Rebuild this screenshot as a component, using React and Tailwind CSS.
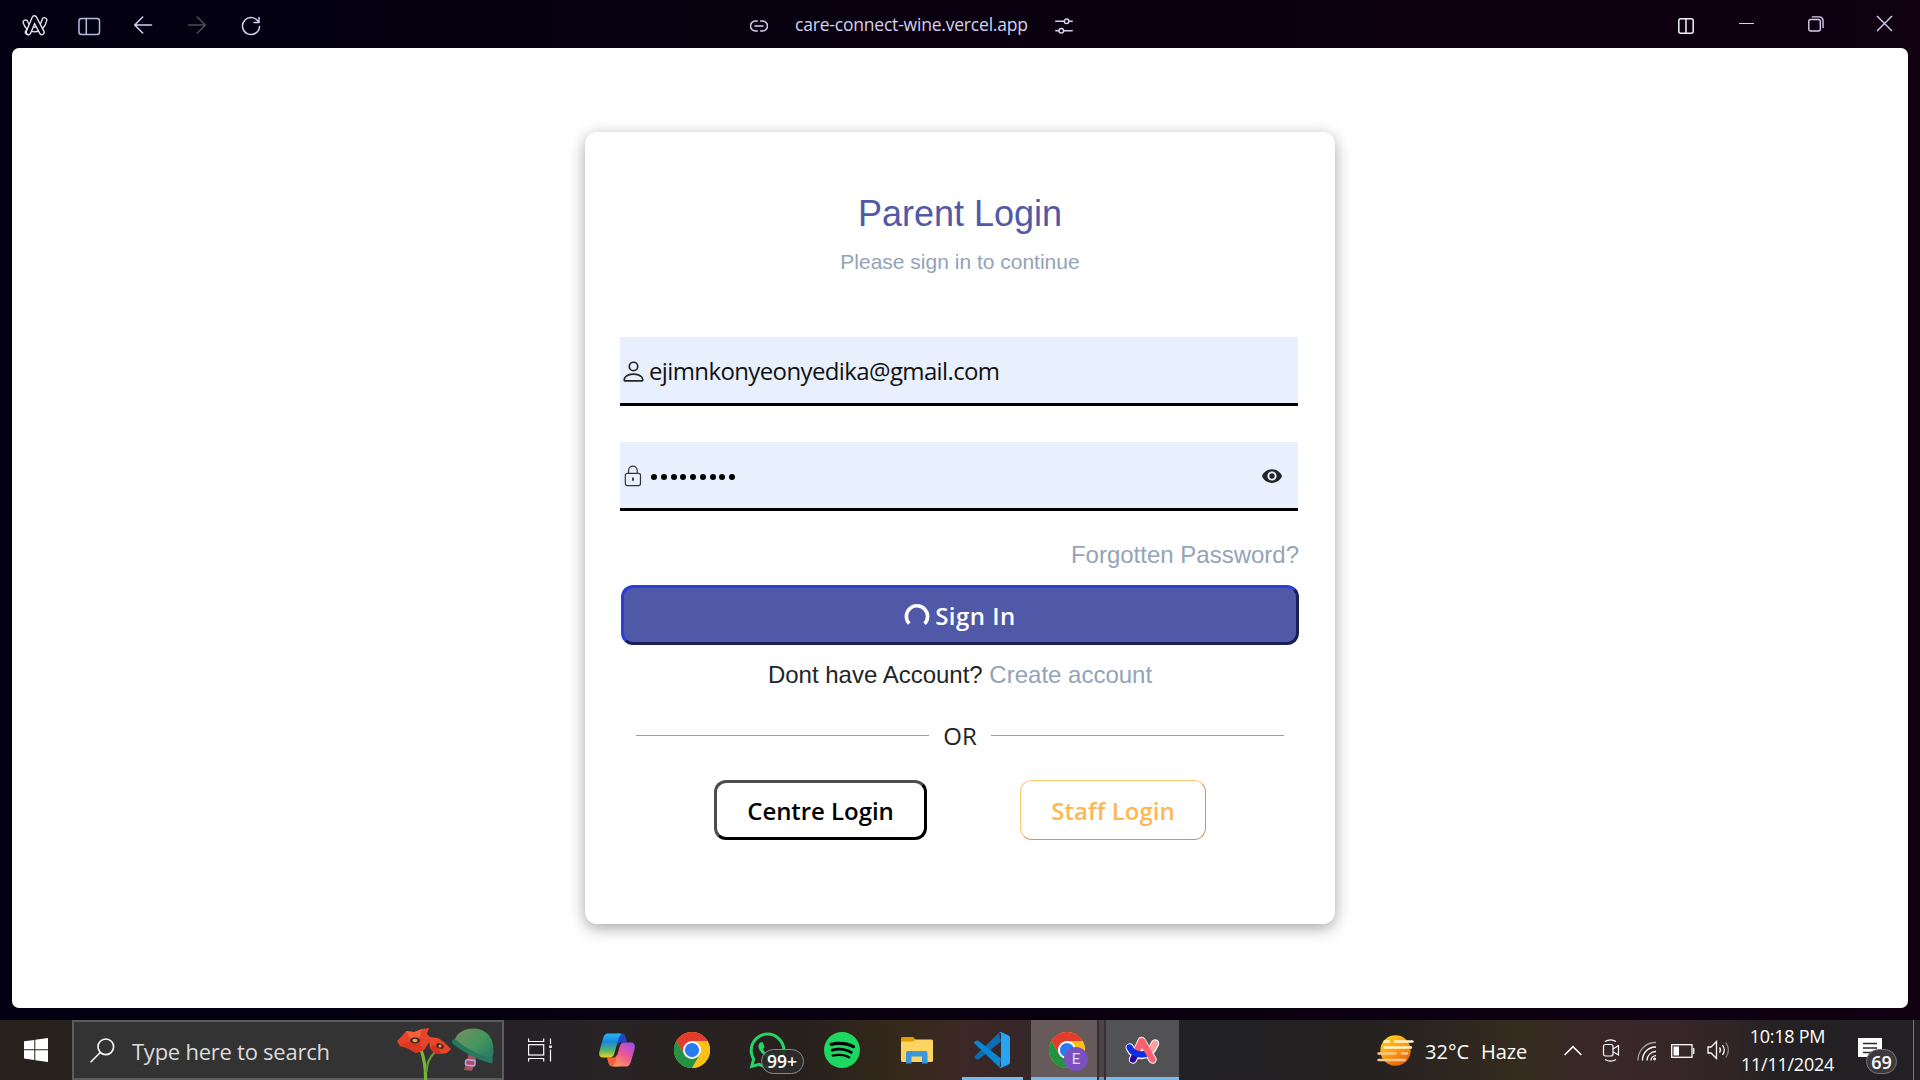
import { BsPerson } from 'react-icons/bs';
import { MdVisibility } from 'react-icons/md';
import { FaWhatsapp } from 'react-icons/fa';
import { SiSpotify } from 'react-icons/si';

/* ---------- Browser chrome ---------- */

function ArcOutline({ className }) {
  const parts = ['M7 24 L11 18', 'M4 11 Q7 20.5 16 20.5 Q26 20 29 8', 'M8 24 L15.7 5.5 L25.5 24'];
  return (
    <svg className={className} viewBox="0 0 33 29" fill="none" strokeLinecap="round" strokeLinejoin="round">
      {parts.map((d) => (
        <g key={d}>
          <path d={d} stroke="#e4e2ea" strokeWidth="8" />
          <path d={d} stroke="#020012" strokeWidth="4.4" />
        </g>
      ))}
    </svg>
  );
}

function TitleBar() {
  return (
    <header className="flex h-12 items-center bg-linear-to-r from-[#020012] via-[#09000f] to-[#100012] text-[#d5d2ee]">
      <ArcOutline className="mt-0.5 ml-[22px] h-[22px] w-[26px]" />
      <svg className="mt-[5px] ml-[29px] h-[19px] w-[24px]" viewBox="0 0 24 19" fill="none" stroke="#b9bbdc" strokeWidth="1.5">
        <rect x="2" y="1.5" width="20.5" height="16" rx="2.5" />
        <path d="M9.3 1.5V17.5" />
      </svg>
      <svg className="mt-[2px] ml-[32px] h-[20px] w-[20px]" viewBox="0 0 20 20" fill="none" stroke="currentColor" strokeWidth="1.5" strokeLinecap="round" strokeLinejoin="round">
        <path d="M9.7 2L1.7 10L9.7 18M1.7 10H18.5" />
      </svg>
      <svg className="mt-[2px] ml-[34px] h-[20px] w-[20px] text-[#504c5e]" viewBox="0 0 20 20" fill="none" stroke="currentColor" strokeWidth="1.5" strokeLinecap="round" strokeLinejoin="round">
        <path d="M10.3 2L18.3 10L10.3 18M18.3 10H1.5" />
      </svg>
      <svg className="mt-1 ml-[34px] h-[20px] w-[20px]" viewBox="0 0 20 20" fill="none" stroke="currentColor" strokeWidth="1.5" strokeLinecap="round" strokeLinejoin="round">
        <path d="M17.6 6.2A8.5 8.5 0 1 0 18.5 10.5" />
        <path d="M18 1.5V6.4H13" />
      </svg>
      <svg className="mt-[3px] ml-[489px] h-[12px] w-[18px]" viewBox="0 0 18 12" fill="none" stroke="currentColor" strokeWidth="1.5" strokeLinecap="round">
        <path d="M7.3 1H5.5A5 5 0 0 0 5.5 11H7.3M10.7 1H12.5A5 5 0 0 1 12.5 11H10.7M5 6H13" />
      </svg>
      <span className="ml-[27px] w-[233px] font-['Open_Sans','Noto_Sans',sans-serif] text-[17.5px] leading-6 tracking-[-0.2px] whitespace-nowrap">care-connect-wine.vercel.app</span>
      <svg className="mt-[3px] ml-[27px] h-[16px] w-[18px]" viewBox="0 0 18 16" fill="none" stroke="currentColor" strokeWidth="1.5" strokeLinecap="round">
        <path d="M0.8 3.3H9M14.4 3.3H17.2M0.8 12.7H3.6M9 12.7H17.2" />
        <circle cx="11.6" cy="3.3" r="2.3" />
        <circle cx="6.3" cy="12.7" r="2.3" />
      </svg>
      <svg className="mt-1 ml-[605px] h-[16px] w-[16px]" viewBox="0 0 16 16" fill="none" stroke="#f4f3f8" strokeWidth="1.5">
        <rect x="0.8" y="0.8" width="14.4" height="14.4" rx="2" />
        <path d="M8 1V15" />
      </svg>
      <span className="-mt-px ml-[45px] h-px w-[15px] bg-[#d5d2ee]" />
      <svg className="-mt-px ml-[54px] h-[16px] w-[16px]" viewBox="0 0 16 16" fill="none" stroke="currentColor" strokeWidth="1.4">
        <rect x="0.8" y="3.5" width="11.5" height="11.5" rx="2" />
        <path d="M3.8 0.9H11.5A3.5 3.5 0 0 1 15 4.4V12" />
      </svg>
      <svg className="-mt-px ml-[52px] h-[17px] w-[17px]" viewBox="0 0 17 17" fill="none" stroke="currentColor" strokeWidth="1.4">
        <path d="M1 1L16 16M16 1L1 16" />
      </svg>
    </header>
  );
}

/* ---------- Login card ---------- */

function LockIcon() {
  return (
    <svg className="h-[22px] w-[18px]" viewBox="0 0 18 22" fill="none" stroke="#2f3440" strokeWidth="1.2">
      <rect x="1.3" y="8.4" width="15.2" height="12.2" rx="2" />
      <path d="M4.6 8.4V5.4A4.3 4.3 0 0 1 13.2 5.4V8.4M8.9 13V15.8" />
      <path d="M8.9 12.4V15.4" strokeWidth="1.8" />
    </svg>
  );
}

function LoginCard() {
  return (
    <section className="h-[792px] w-[750px] rounded-xl bg-white px-9 pt-[59px] shadow-[0_4px_16px_rgba(0,0,0,0.36)]">
      <h1 className="text-center font-['Liberation_Sans',Arial,sans-serif] text-[36px] leading-[45px] text-[#5058a8]">Parent Login</h1>
      <p className="mt-[13px] text-center font-['Liberation_Sans',Arial,sans-serif] text-[21px] leading-[25px] text-[#94a3b8]">Please sign in to continue</p>

      <div className="mt-[63px] mr-px -ml-px flex h-[69px] items-start border-b-[3px] border-black bg-[#e8f0fe]">
        <BsPerson className="mt-[21px] h-[27px] w-[27px] text-[#212529]" />
        <span className="mt-[17px] ml-[2px] text-[24px] leading-[33px] tracking-[-0.62px] text-[#111]">ejimnkonyeonyedika@gmail.com</span>
      </div>

      <div className="mt-9 mr-px -ml-px flex h-[69px] items-center border-b-[3px] border-black bg-[#e8f0fe]">
        <span className="ml-[4px] pt-0.5">
          <LockIcon />
        </span>
        <span className="mt-[4px] ml-[9px] flex gap-[3.75px]">
          {Array.from({ length: 9 }, (_, i) => (
            <i key={i} className="h-[6px] w-[6px] rounded-full bg-black" />
          ))}
        </span>
        <MdVisibility className="mt-0.5 mr-[15px] ml-auto h-[22px] w-[22px] text-[#212529]" />
      </div>

      <p className="mt-[30px] text-right font-['Liberation_Sans',Arial,sans-serif] text-[24px] leading-[27px] text-[#94a3b8]">Forgotten Password?</p>

      <button className="mt-[17px] flex h-[60px] w-full items-start justify-center rounded-xl border-[3px] border-t-[#2b3fd6] border-r-[#1b1f56] border-b-[#1b1f56] border-l-[#2b3fd6] bg-[#5058a8] text-white">
        <svg className="mt-[15px] h-[26px] w-[26px]" viewBox="0 0 26 26" fill="none" stroke="#fff" strokeWidth="3.6">
          <path d="M5.2 20.6A10.6 10.6 0 1 1 20.6 20.8" />
        </svg>
        <span className="mt-[11px] ml-[5px] text-[24px] leading-[33px] font-semibold tracking-[0.5px]">Sign In</span>
      </button>

      <p className="mt-4 text-center font-['Liberation_Sans',Arial,sans-serif] text-[24px] leading-[27px] text-[#212529]">
        Dont have Account? <a className="text-[#94a3b8]">Create account</a>
      </p>

      <div className="mt-[31px] flex items-center px-[15px] text-[24px] leading-[33px] text-[#212529]">
        <span className="h-px flex-1 bg-[#8e9fb8]" />
        <span className="w-[62px] text-center">OR</span>
        <span className="h-px flex-1 bg-[#8e9fb8]" />
      </div>

      <div className="mt-7 flex justify-center gap-[93px]">
        <button className="flex h-[60px] w-[213px] justify-center rounded-xl border-[3px] border-t-[#4d4d4d] border-r-black border-b-black border-l-[#4d4d4d] pt-[11px] text-[24px] leading-[33px] font-semibold tracking-[-0.05px] text-black">Centre Login</button>
        <button className="flex h-[60px] w-[186px] justify-center rounded-xl border border-t-[#ffc470] border-r-[#c59b5c] border-b-[#c59b5c] border-l-[#ffc470] pt-[13px] text-[24px] leading-[33px] font-semibold tracking-[0.05px] text-[#ffb753]">Staff Login</button>
      </div>
    </section>
  );
}

/* ---------- Taskbar icons ---------- */

function Poppies() {
  return (
    <svg className="h-[56px] w-[100px]" viewBox="0 0 100 56" fill="none">
      <path d="M24 22C28 32 29 42 28.500 56" stroke="#78b63a" strokeWidth="3.2" />
      <path d="M38 24C31 31 30 36 29.500 44" stroke="#5f9e34" strokeWidth="2.2" />
      <path d="M0 13L5 8L9 3L17 4L25 1L32 0L30 6L34 10L31 16L27 22L19 25L10 20L3 18Z" fill="#e8432a" />
      <path d="M9 3L17 4L25 1L23 9L13 10Z" fill="#f4603c" />
      <path d="M3 18L10 20L19 25L27 22L22 15L10 14Z" fill="#d9371f" />
      <ellipse cx="18" cy="12.500" rx="5" ry="3" fill="#3b2530" />
      <ellipse cx="18" cy="12.500" rx="2.600" ry="1.800" fill="#e0a92a" />
      <path d="M32 13L33 9L41 10L47 14L54 21L50 25L44 26L37 25L33 20Z" fill="#ea452b" />
      <path d="M33 20L37 25L44 26L42 20L36 17Z" fill="#d2321f" />
      <ellipse cx="43" cy="18" rx="4" ry="2.600" transform="rotate(25 43 18)" fill="#3b2530" />
      <circle cx="43" cy="18" r="1.500" fill="#e0a92a" />
      <path d="M72 25L80 28L75 43L67 42Z" fill="#a5515f" />
      <rect x="68.500" y="32" width="9.500" height="5.500" rx="1.500" stroke="#c79ae8" strokeWidth="1.600" transform="rotate(6 73 35)" />
      <path d="M57 13C60 4 68 0.500 77 0.500C90 1 97 10 96.500 24L95 33C82 30 68 22 57 13Z" fill="url(#helmetShade)" />
      <path d="M55 12.500Q56.500 10.500 59 12C69 20.500 82 27 96 31L95 35.500C80 32 64 23 55.500 15.500Z" fill="#26795f" />
      <defs>
        <linearGradient id="helmetShade" x1="64" y1="2" x2="94" y2="32" gradientUnits="userSpaceOnUse">
          <stop stopColor="#6d9163" />
          <stop offset="0.500" stopColor="#45965d" />
          <stop offset="1" stopColor="#2b7468" />
        </linearGradient>
      </defs>
    </svg>
  );
}

function CopilotIcon() {
  return (
    <svg className="h-[34px] w-[36px]" viewBox="0 0 36 34">
      <defs>
        <linearGradient id="cpA" x1="0" y1="0" x2="0" y2="1">
          <stop stopColor="#2bb5f5" />
          <stop offset="0.35" stopColor="#1a86dd" />
          <stop offset="0.7" stopColor="#52b56a" />
          <stop offset="1" stopColor="#f3cf1b" />
        </linearGradient>
        <linearGradient id="cpB" x1="0.8" y1="0" x2="0.2" y2="1">
          <stop stopColor="#a44df0" />
          <stop offset="0.45" stopColor="#e8539a" />
          <stop offset="1" stopColor="#ff9a5c" />
        </linearGradient>
      </defs>
      <path d="M17 0.500H22.500C25 0.500 26 2 26.700 4.500L28 9.500H22C19.500 9.500 18.500 11 18 13Z" fill="#1c47c8" />
      <path d="M19 33.500H13.500C11 33.500 10 32 9.300 29.500L8 24.500H14C16.500 24.500 17.500 23 18 21Z" fill="#f2603c" />
      <path d="M8.500 0.500H20C23 0.500 22.500 1 21.500 2C20.500 3 20 4 19.300 6.500L15.500 20C14.500 23.500 13 24.500 10.500 24.500H4C0.500 24.500 -0.500 21.500 0.500 18L4 5.500C5 2.200 6.500 0.500 8.500 0.500Z" fill="url(#cpA)" />
      <path d="M27.500 33.500H16C13 33.500 13.500 33 14.500 32C15.500 31 16 30 16.700 27.500L20.500 14C21.500 10.500 23 9.500 25.500 9.500H32C35.500 9.500 36.500 12.500 35.500 16L32 28.500C31 31.800 29.500 33.500 27.500 33.500Z" fill="url(#cpB)" />
    </svg>
  );
}

function ChromeIcon() {
  return (
    <svg className="h-9 w-9" viewBox="0 0 48 48">
      <circle cx="24" cy="24" r="24" fill="#fbc116" />
      <path d="M24 12H44.800A24 24 0 0 0 3.200 12L13.600 30Z" fill="#e33b2e" />
      <path d="M3.200 12A24 24 0 0 0 24 48L34.400 30A12 12 0 0 1 13.600 30Z" fill="#229342" />
      <path d="M24 24H34.400V30L24 48L13.600 30Z" fill="#229342" />
      <path d="M34.400 30L24 48A24 24 0 0 0 44.800 12H24Z" fill="#fbc116" />
      <circle cx="24" cy="24" r="12" fill="#fff" />
      <circle cx="24" cy="24" r="9.500" fill="#2a7af0" />
    </svg>
  );
}

function FolderIcon() {
  return (
    <svg className="h-[27px] w-[32px]" viewBox="0 0 32 27">
      <path d="M0 1.500Q0 0 1.500 0H12L15 3V7H0Z" fill="#e09b06" />
      <path d="M0 4.500H12L14.500 2.500H30.500Q32 2.500 32 4V23.500Q32 25 30.500 25H1.500Q0 25 0 23.500Z" fill="#fdd462" />
      <path d="M5 26.500V16Q5 14 7 14H24.500Q26.500 14 26.500 16V26.500H21V19.500H10.500V26.500Z" fill="#3b97dd" />
    </svg>
  );
}

function VSCodeIcon() {
  return (
    <svg className="h-9 w-9" viewBox="0 0 36 36">
      <path d="M0.500 24.500L25 0.800L27 9.500L5 27Q3.500 28 2.300 27L0.500 25.500Z" fill="#0b6fb8" />
      <path d="M0.500 11.500Q-0.300 10.500 0.500 9.700L2.500 8.800Q3.800 8.300 5 9.200L27 26.500L25.500 35.500Z" fill="#0a86d2" />
      <path d="M27 0L34.500 3.500Q36 4.300 36 6V30Q36 31.700 34.500 32.500L27 36Q25.500 36 24.800 35Q27 36 27 33.500V2.500Q27 0 24.800 1Q25.500 0 27 0Z" fill="#27a5f2" />
    </svg>
  );
}

function ArcIcon() {
  return (
    <svg className="h-[30px] w-[35px]" viewBox="0 0 35 30" fill="none" strokeLinecap="round" strokeLinejoin="round">
      <g stroke="#fff" strokeWidth="8.400">
        <path d="M8 24.500L16.700 6L27.500 24.500" />
        <path d="M4.700 12.500Q8 20 16.500 20Q26 19 30 8.500" />
      </g>
      <g strokeWidth="6.400">
        <path d="M8 24.500L10.500 19" stroke="#2a06a0" />
        <path d="M24 16.500Q28 13.500 30 8.500" stroke="#ff9ea0" />
        <path d="M12.500 14.500L16.700 6L21 13" stroke="#fb5f6f" />
        <path d="M4.700 12.500Q8 19.500 16.500 19.500Q20 19.300 22 18.500" stroke="#0a2fe6" />
        <path d="M17 6.500L27.500 24.500" stroke="#fb6070" />
      </g>
    </svg>
  );
}

function HazeIcon() {
  return (
    <svg className="h-[31px] w-[37px]" viewBox="0 0 37 31" fill="none" strokeLinecap="round">
      <defs>
        <linearGradient id="sunShade" x1="0.200" y1="0" x2="0.800" y2="1">
          <stop stopColor="#ffd21c" />
          <stop offset="0.500" stopColor="#fb9d10" />
          <stop offset="1" stopColor="#e9560c" />
        </linearGradient>
      </defs>
      <circle cx="18.500" cy="15.500" r="15.200" fill="url(#sunShade)" />
      <path d="M7.500 6.500H12M18 6.500H35.500M7.500 12.500H34" stroke="#fff1cf" strokeWidth="2.400" />
      <path d="M1.500 18.500H18.500M25 18.500H30M1.500 25H28" stroke="#f3c98c" strokeWidth="2.400" />
    </svg>
  );
}

function Underline({ className }) {
  return <span className={`absolute bottom-0 h-[3px] bg-[#76b9ed] ${className}`} />;
}

function Taskbar() {
  return (
    <footer className="flex h-[60px] items-center bg-[linear-gradient(90deg,#28221c_0px,#262126_505px,#282324_620px,#27201d_800px,#35291a_900px,#3c2825_965px,#33262a_1050px,#222125_1180px,#242120_1370px,#352b1e_1520px,#39272a_1620px,#332527_1720px,#232122_1780px,#222022_1920px)] text-white">
      <div className="flex w-[72px] justify-center">
        <svg className="h-6 w-6" viewBox="0 0 24 24" fill="#fff">
          <path d="M0 3.300L10.300 1.900V11.300H0ZM11.300 1.700L24 0V11.300H11.300ZM0 12.300H10.300V21.900L0 20.500ZM11.300 12.300H24V24L11.300 22.200Z" />
        </svg>
      </div>

      <div className="flex h-[60px] w-[432px] items-start border-2 border-[#5c5c5c] bg-[#333]">
        <svg className="mt-4 ml-4 h-[25px] w-[25px]" viewBox="0 0 25 25" fill="none" stroke="#fff" strokeWidth="1.600">
          <circle cx="15.800" cy="8.800" r="7.800" />
          <path d="M10.300 14.500L0.500 24.300" />
        </svg>
        <span className="mt-[14px] ml-[17px] w-[200px] text-[22px] leading-[30px] tracking-[-0.25px] whitespace-nowrap text-[#dcdcdc]">Type here to search</span>
        <div className="mt-1.5 ml-[65px] h-[52px] overflow-hidden">
          <Poppies />
        </div>
      </div>

      <div className="flex w-[75.500px] pl-6">
        <svg className="h-6 w-6" viewBox="0 0 24 24" fill="none" stroke="#fff" strokeWidth="1.200">
          <path d="M0.600 0.500V3.500H15.700V0.500M0.600 23.500V20.500H15.700V23.500M22.500 0.500V6M22.500 11.500V23.500" />
          <rect x="0.600" y="6.700" width="15.100" height="10.300" />
          <rect x="21.300" y="7.500" width="2.500" height="2.500" fill="#fff" stroke="none" />
        </svg>
      </div>

      <div className="flex w-[75px] justify-center"><CopilotIcon /></div>
      <div className="flex w-[75px] justify-center"><ChromeIcon /></div>
      <div className="relative flex w-[75px] justify-center">
        <FaWhatsapp className="h-[41px] w-[41px] text-[#25d366]" />
        <span className="absolute top-[19px] left-[31px] flex h-[25px] w-[43px] items-center justify-center rounded-full border border-[#8a8886] bg-[#2e2b2a]/90 text-[17.500px] leading-[25px] font-semibold">99+</span>
      </div>
      <div className="flex w-[75px] justify-center">
        <span className="flex h-9 w-9 items-center justify-center rounded-full bg-[radial-gradient(circle,#000_55%,transparent_60%)]">
          <SiSpotify className="h-9 w-9 text-[#1ed760]" />
        </span>
      </div>
      <div className="flex w-[75px] justify-center"><FolderIcon /></div>
      <div className="relative flex h-[60px] w-[76.500px] items-center pl-[19.500px]">
        <VSCodeIcon />
        <Underline className="left-[7.500px] w-[61px]" />
      </div>
      <div className="relative flex h-[60px] w-[66px] items-center bg-[#665a5b] pl-[18px]">
        <span className="relative">
          <ChromeIcon />
          <span className="absolute top-[15px] left-[15px] flex h-6 w-6 items-center justify-center rounded-full bg-[#7b52bd] font-['Roboto',sans-serif] text-[15px] leading-none text-[#e6dcf5]">E</span>
        </span>
        <Underline className="left-0 w-[66px]" />
      </div>
      <div className="relative h-[60px] w-[9px] border-x-2 border-[#363033] bg-[#4b4547]">
        <Underline className="left-0 w-[5px] opacity-70" />
      </div>
      <div className="relative flex h-[60px] w-[73px] items-center justify-center bg-[#525154]">
        <ArcIcon />
        <Underline className="left-0 w-[73px]" />
      </div>

      <div className="ml-[198px] flex items-center text-[20px] leading-7">
        <HazeIcon />
        <span className="mt-[3px] ml-[11px] w-[56px] tracking-[0.05px]">32°C</span>
        <span className="mt-[3px] w-[47px] tracking-[-0.1px]">Haze</span>
      </div>

      <svg className="ml-[36px] h-[11px] w-[18px]" viewBox="0 0 18 11" fill="none" stroke="#fff" strokeWidth="1.500">
        <path d="M0.600 10L9 1.600L17.400 10" />
      </svg>
      <svg className="ml-[20px] h-[23px] w-[18px]" viewBox="0 0 18 23" fill="none" stroke="#fff" strokeWidth="1.200">
        <path d="M3 2.400Q8.500 -0.800 14 2.400M3 20.600Q8.500 23.800 14 20.600" />
        <rect x="1.500" y="5.500" width="9.500" height="11.500" rx="2" />
        <path d="M11 10L16.500 6.500V16L11 12.800" />
      </svg>
      <svg className="mt-0.5 ml-[17px] h-[20px] w-[20px]" viewBox="0 0 20 20" fill="none" stroke="#fff" strokeWidth="1.300">
        <path d="M1 19.500A17.500 17.500 0 0 1 19 1.500" stroke="#a9a2a3" />
        <path d="M5.500 19.500A13 13 0 0 1 19 6M10 19.500A9 9 0 0 1 19 10.500M14 19.500A5 5 0 0 1 19 14.700" />
        <circle cx="17.600" cy="18" r="1.400" fill="#fff" stroke="none" />
      </svg>
      <svg className="mt-px ml-[14px] h-[14px] w-[24px]" viewBox="0 0 24 14" fill="none" stroke="#fff" strokeWidth="1.300">
        <rect x="0.700" y="0.700" width="20.300" height="12.600" />
        <path d="M22.700 4V10" />
        <rect x="2.500" y="2.500" width="5.500" height="9" fill="#fff" stroke="none" />
      </svg>
      <svg className="ml-[12px] h-[20px] w-[23px]" viewBox="0 0 23 20" fill="none" stroke="#fff" strokeWidth="1.300">
        <path d="M1 7H4L9.500 1.500V18.500L4 13H1Z" />
        <path d="M12.500 7.500Q14.500 10 12.500 12.500M15.500 5Q19 10 15.500 15" />
        <path d="M18.800 2.500Q24 10 18.800 17.500" stroke="#8a8485" />
      </svg>
      <div className="ml-[5px] flex w-[105px] flex-col items-center text-[18px] leading-7 tracking-[-0.250px] whitespace-nowrap">
        <span>10:18 PM</span>
        <span>11/11/2024</span>
      </div>
      <div className="relative ml-[18px] h-9 w-[40px]">
        <svg className="mt-[6px] h-6 w-6" viewBox="0 0 24 24">
          <path d="M0 0H24V19H15L10 24V19H0Z" fill="#fff" />
          <path d="M5 5.500H19M5 10H19M5 14.500H14" stroke="#2a2728" strokeWidth="1.300" />
        </svg>
        <span className="absolute top-[17px] left-[8px] flex h-[25px] w-[31px] items-center justify-center rounded-full border border-[#77757a] bg-[#3c3a3d] text-[18px] leading-none font-semibold">69</span>
      </div>
      <span className="ml-auto h-full w-[7px] border-l border-[#77757a]" />
    </footer>
  );
}

export default function App() {
  return (
    <div className="flex h-[1080px] w-[1920px] flex-col overflow-hidden bg-linear-to-r from-[#020012] via-[#09000f] to-[#100012] font-['Open_Sans','Noto_Sans',sans-serif]">
      <TitleBar />
      <main className="mx-3 flex h-[960px] justify-center rounded-[7px] bg-white pt-[84px]">
        <LoginCard />
      </main>
      <div className="h-3" />
      <Taskbar />
    </div>
  );
}
